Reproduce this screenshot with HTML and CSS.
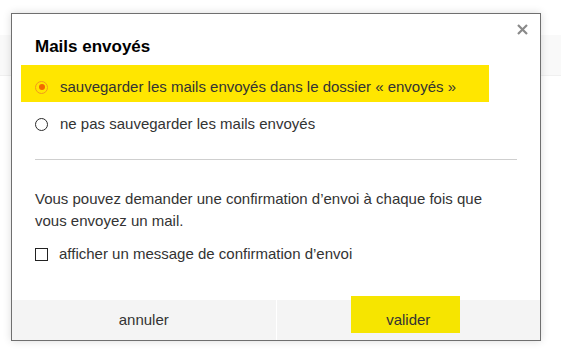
FILE: index.html
```html
<!DOCTYPE html>
<html lang="fr">
<head>
    <meta charset="UTF-8">
    <meta name="viewport" content="width=device-width, initial-scale=1.0">
    <title>Mails envoyés</title>
    <link rel="stylesheet" href="styles.css">
</head>
<body>
    <div class="page-bar"></div>

    <div class="dialog">
        <button class="close" aria-label="fermer">
            <svg width="11" height="11" viewBox="0 0 11 11">
                <path d="M1 1 L10 10 M10 1 L1 10" stroke="#8a8a8a" stroke-width="2.2" fill="none"/>
            </svg>
        </button>

        <h2>Mails envoyés</h2>

        <label class="option selected">
            <span class="radio checked"></span>
            sauvegarder les mails envoyés dans le dossier « envoyés »
        </label>
        <label class="option">
            <span class="radio"></span>
            ne pas sauvegarder les mails envoyés
        </label>

        <hr>

        <p>Vous pouvez demander une confirmation d’envoi à chaque fois que vous envoyez un mail.</p>

        <label class="check-row">
            <span class="checkbox"></span>
            afficher un message de confirmation d’envoi
        </label>

        <div class="footer">
            <button class="cancel">annuler</button>
            <button class="ok"><span>valider</span></button>
        </div>
    </div>
</body>
</html>
```

FILE: styles.css
```css
body {
    font-family: 'Liberation Sans', Arial, sans-serif;
    margin: 0;
    padding: 0;
    background: #fff;
    color: #333;
}

.page-bar {
    margin-top: 35px;
    height: 40px;
    background: #f9f9f9;
    border-bottom: 1px solid #f0f0f0;
}

.dialog {
    position: absolute;
    left: 11px;
    top: 13px;
    width: 530px;
    height: 328px;
    box-sizing: border-box;
    border: 1px solid #6f6f6f;
    background: #fff;
    box-shadow: 0 0 8px rgba(0, 0, 0, 0.15);
    padding: 23px 23px 0;
    display: flex;
    flex-direction: column;
}

.close {
    position: absolute;
    top: 10px;
    right: 12px;
    border: none;
    background: none;
    padding: 0;
    width: 11px;
    height: 11px;
    cursor: pointer;
}

.close svg {
    display: block;
}

h2 {
    margin: 0 0 8px;
    font-size: 17px;
    line-height: 20px;
    color: #000;
}

.option {
    display: flex;
    align-items: center;
    width: 468px;
    box-sizing: border-box;
    margin-left: -14px;
    padding: 12px 14px 5px;
    font-size: 15px;
    line-height: 20px;
}

.option.selected {
    background: #ffe600;
}

.radio {
    width: 13px;
    height: 13px;
    box-sizing: border-box;
    border: 1.6px solid #2a2a2a;
    border-radius: 50%;
    margin-right: 12px;
    flex-shrink: 0;
    display: flex;
    align-items: center;
    justify-content: center;
}

.radio.checked {
    border: 1px solid #f29a1e;
}

.radio.checked::after {
    content: "";
    width: 6px;
    height: 6px;
    border-radius: 50%;
    background: #f26a00;
}

hr {
    border: none;
    border-top: 1px solid #cfcfcf;
    margin: 20px 0 0;
}

p {
    margin: 28px 0 0;
    font-size: 15px;
    line-height: 22px;
}

.check-row {
    display: flex;
    align-items: center;
    margin-top: 12px;
    font-size: 15px;
    line-height: 20px;
}

.checkbox {
    width: 13px;
    height: 13px;
    box-sizing: border-box;
    border: 1.5px solid #222;
    margin-right: 11px;
    flex-shrink: 0;
}

.footer {
    margin: auto -23px 0;
    height: 40px;
    display: flex;
    align-items: flex-start;
    background: #f4f4f4;
}

.footer button {
    flex: 1;
    height: 40px;
    border: none;
    background: none;
    font-family: inherit;
    font-size: 15px;
    line-height: 20px;
    color: #333;
    padding: 0;
    cursor: pointer;
}

.footer .ok {
    border-left: 1px solid #fff;
    display: flex;
    justify-content: center;
    align-items: flex-start;
}

.footer .ok span {
    display: block;
    width: 109px;
    box-sizing: border-box;
    margin: -4px 6px 0 0;
    padding: 14px 0 3px 6px;
    background: #f6e500;
}
```
